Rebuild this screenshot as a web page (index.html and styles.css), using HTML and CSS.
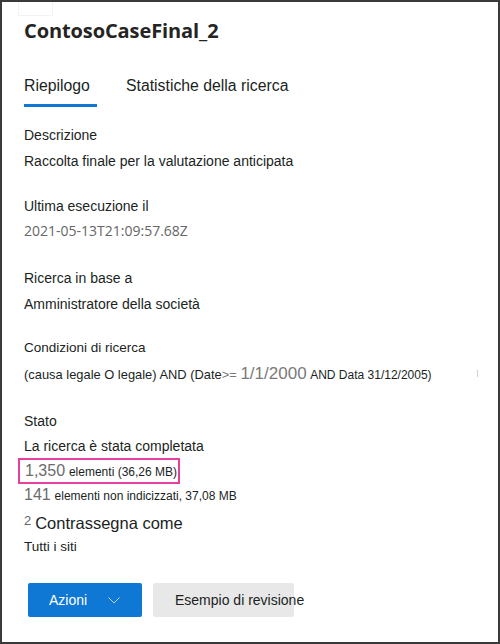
FILE: index.html
```html
<!DOCTYPE html>
<html lang="it">
<head>
<meta charset="utf-8">
<title>ContosoCaseFinal_2</title>
<link rel="stylesheet" href="styles.css">
</head>
<body>
<div class="panel">
  <div class="ghost"></div>
  <h1 class="title">ContosoCaseFinal_2</h1>
  <div class="tabs">
    <div class="tab active">Riepilogo</div>
    <div class="tab">Statistiche della ricerca</div>
  </div>

  <div class="group first">
    <div class="line">Descrizione</div>
    <div class="line">Raccolta finale per la valutazione anticipata</div>
  </div>

  <div class="group">
    <div class="line">Ultima esecuzione il</div>
    <div class="line date">2021-05-13T21:09:57.68Z</div>
  </div>

  <div class="group g3">
    <div class="line">Ricerca in base a</div>
    <div class="line">Amministratore della società</div>
  </div>

  <div class="group g4">
    <div class="line narrow">Condizioni di ricerca</div>
    <div class="line cond">(causa legale O legale) AND (Date<span class="gray">&gt;= </span><span class="big gray">1/1/2000</span> <span class="small">AND Data 31/12/2005)</span><span class="tick"></span></div>
  </div>

  <div class="group g5">
    <div class="line">Stato</div>
    <div class="line done">La ricerca è stata completata</div>
    <div class="line count c1"><span class="boxed"><span class="num">1,350</span> <span class="small">elementi (36,26 MB)</span></span></div>
    <div class="line count"><span class="num">141</span> <span class="small">elementi non indicizzati, 37,08 MB</span></div>
    <div class="line tag"><span class="sup">2</span> <span class="tagtext">Contrassegna come</span></div>
    <div class="line sites">Tutti i siti</div>
  </div>

  <div class="actions">
    <button class="btn primary">Azioni<svg class="chev" width="12" height="7" viewBox="0 0 12 7"><polyline points="0.5,0.5 6,6 11.5,0.5" fill="none" stroke="#bcd6ef" stroke-width="1"/></svg></button>
    <button class="btn secondary"><span>Esempio di revisione</span></button>
  </div>
</div>
</body>
</html>
```
FILE: styles.css
```css
* { box-sizing: border-box; }
html, body { margin: 0; padding: 0; background: #ffffff; }
body { font-family: "Liberation Sans", Arial, sans-serif; color: #201f1e; }

.panel {
  position: relative;
  width: 500px;
  height: 644px;
  border: 2px solid #3a3a3a;
  padding: 0 0 0 22px;
  overflow: hidden;
}

.ghost {
  position: absolute;
  left: 16px;
  top: -2px;
  width: 35px;
  height: 16px;
  border: 1px solid #f3f3f3;
  border-top: none;
}

.title {
  margin: 14px 0 0 0;
  font-family: "Open Sans", "Noto Sans", sans-serif;
  font-weight: 700;
  font-size: 20px;
  line-height: 30px;
  color: #252423;
  letter-spacing: -0.1px;
}

.tabs {
  display: flex;
  gap: 29px;
  margin-top: 26px;
  height: 36px;
}
.tab {
  font-size: 15.8px;
  line-height: 28px;
  color: #201f1e;
  height: 36px;
}
.tab.active {
  width: 73px;
  border-bottom: 3px solid #0f78d4;
  height: 35px;
}

.group { margin-top: 19px; }
.group.first { margin-top: 14px; }
.group.g3 { margin-top: 22px; }
.group.g4 { margin-top: 18px; }
.group.g5 { margin-top: 21px; }

.line {
  font-size: 14px;
  line-height: 26px;
  height: 26px;
  white-space: nowrap;
}
.narrow { font-size: 13.5px; }
.date {
  font-family: "Open Sans", "Noto Sans", sans-serif;
  font-size: 14px;
  color: #666666;
  line-height: 24px;
  height: 24px;
}
.gray { color: #7a7a7a; }
.big { font-size: 17px; }
.small { font-size: 12px; }
.cond { position: relative; font-size: 12.9px; }
.tick {
  position: absolute;
  left: 453px;
  top: 9px;
  width: 1px;
  height: 7px;
  background: #d0d0d0;
}

.done { height: 24px; line-height: 24px; }
.count { height: 26px; line-height: 26px; }
.count.c1 { height: 24px; line-height: 24px; }
.num { font-size: 16px; color: #6b6b6b; }
.boxed {
  display: inline-block;
  margin-left: -6px;
  padding: 0 5px 0 5px;
  border: 2px solid #e83e9c;
  line-height: 22px;
  height: 26px;
  width: 162px;
}
.tag { height: 26px; line-height: 26px; }
.sup { font-size: 13px; color: #666666; vertical-align: 4px; }
.tagtext { font-size: 16.5px; color: #201f1e; }
.sites { font-size: 13.5px; }

.actions {
  display: flex;
  gap: 11px;
  margin-top: 23px;
  padding-left: 4px;
}
.btn {
  height: 34px;
  border: none;
  border-radius: 2px;
  font-family: "Liberation Sans", Arial, sans-serif;
  font-size: 14px;
  padding: 0;
  display: flex;
  align-items: center;
}
.primary {
  width: 114px;
  background: #0f78d4;
  color: #ffffff;
  padding-left: 21px;
}
.chev { margin-left: 21px; margin-top: 1px; }
.secondary {
  width: 141px;
  background: #e8e8e8;
  color: #201f1e;
  padding-left: 22px;
  overflow: visible;
  white-space: nowrap;
}
```
